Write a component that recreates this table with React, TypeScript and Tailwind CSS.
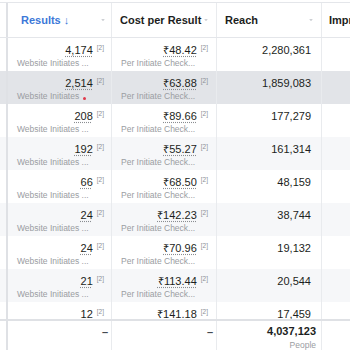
import React from "react";

type Row = {
  results: string;
  cost: string;
  reach: string;
  flagged?: boolean;
};

const rows: Row[] = [
  { results: "4,174", cost: "₹48.42", reach: "2,280,361" },
  { results: "2,514", cost: "₹63.88", reach: "1,859,083", flagged: true },
  { results: "208", cost: "₹89.66", reach: "177,279" },
  { results: "192", cost: "₹55.27", reach: "161,314" },
  { results: "66", cost: "₹68.50", reach: "48,159" },
  { results: "24", cost: "₹142.23", reach: "38,744" },
  { results: "24", cost: "₹70.96", reach: "19,132" },
  { results: "21", cost: "₹113.44", reach: "20,544" },
  { results: "12", cost: "₹141.18", reach: "17,459" },
];

function rowBg(i: number) {
  if (i === 1) return "bg-[#e2e4e8]";
  return i % 2 === 1 ? "bg-[#f6f7f9]" : "bg-white";
}

function Caret() {
  return (
    <svg className="w-2 h-2 text-[#bcc0c6] shrink-0" viewBox="0 0 8 8" aria-hidden="true">
      <path d="M2.2 3.2 L4 5 L5.8 3.2 Z" fill="currentColor" />
    </svg>
  );
}

function Metric({ value }: { value: string }) {
  return (
    <span className="h-[14px] flex items-start justify-end leading-[14px]">
      <span className="underline decoration-dotted decoration-[#8a8d91] underline-offset-[2px]">{value}</span>
      <span className="ml-[4px] text-[6.5px] leading-[9px] text-[#8d9096]">[2]</span>
    </span>
  );
}

export default function App() {
  return (
    <div
      className="w-[350px] h-[350px] overflow-hidden bg-white flex flex-col text-[#1c1e21]"
      style={{ fontFamily: "'Liberation Sans', Arial, sans-serif" }}
    >
      {/* Header */}
      <div className="mt-[2px] h-[36px] flex border-t border-b border-[#e4e6ea] shrink-0">
        <div className="w-[8px] shrink-0 border-r-2 border-[#dfe1e5]" />
        <div className="w-[104px] shrink-0 flex items-center justify-between pl-[13px] pr-[4px] border-r border-[#e9ebee]">
          <span className="text-[11px] font-bold text-[#3c78d8] whitespace-nowrap">Results ↓</span>
          <Caret />
        </div>
        <div className="w-[105px] shrink-0 flex items-center justify-between pl-[8px] pr-[6px] border-r border-[#e9ebee]">
          <span className="text-[11px] font-bold whitespace-nowrap">Cost per Result</span>
          <Caret />
        </div>
        <div className="w-[105px] shrink-0 flex items-center justify-between pl-[8px] pr-[6px] border-r border-[#e9ebee]">
          <span className="text-[11px] font-bold">Reach</span>
          <Caret />
        </div>
        <div className="flex-1 flex items-center pl-[7px] overflow-hidden">
          <span className="text-[11px] font-bold whitespace-nowrap">Impressions</span>
        </div>
      </div>

      {/* Body */}
      <div className="flex-1 overflow-hidden">
        {rows.map((r, i) => (
          <div key={i} className={`h-[33px] flex text-[11px] ${rowBg(i)}`}>
            <div className="w-[8px] shrink-0 border-r-2 border-[#dfe1e5]" />
            <div className="w-[104px] shrink-0 flex flex-col pt-[5px] pl-[9px] pr-[7px] border-r border-[#e9ebee]">
              <Metric value={r.results} />
              <div className="mt-[1px] h-[11px] leading-[11px] text-[8.5px] text-[#9a9da2] whitespace-nowrap flex items-center">
                {r.flagged ? (
                  <>
                    Website Initiates
                    <span className="ml-[4px] mt-[3px] w-[3px] h-[3px] rounded-full bg-[#e0394b]" />
                  </>
                ) : (
                  "Website Initiates ..."
                )}
              </div>
            </div>
            <div className="w-[105px] shrink-0 flex flex-col pt-[5px] pl-[9px] pr-[8px] border-r border-[#e9ebee]">
              <Metric value={r.cost} />
              <div className="mt-[1px] h-[11px] leading-[11px] text-[8.5px] text-[#9a9da2] whitespace-nowrap">Per Initiate Check...</div>
            </div>
            <div className="w-[105px] shrink-0 flex justify-end pt-[5px] pr-[10px] leading-[14px] border-r border-[#e9ebee]">
              {r.reach}
            </div>
            <div className="flex-1" />
          </div>
        ))}
      </div>

      {/* Summary */}
      <div className="h-[31px] shrink-0 flex border-t-2 border-[#dfe1e5] bg-white">
        <div className="w-[8px] shrink-0 border-r-2 border-[#dfe1e5]" />
        <div className="w-[104px] shrink-0 flex justify-end items-start pt-[3px] pr-[3px] border-r border-[#e9ebee] text-[11px] leading-[16px] font-bold text-[#444950]">–</div>
        <div className="w-[105px] shrink-0 flex justify-end items-start pt-[3px] pr-[3px] border-r border-[#e9ebee] text-[11px] leading-[16px] font-bold text-[#444950]">–</div>
        <div className="w-[105px] shrink-0 flex flex-col items-end pt-[3px] pr-[5px] border-r border-[#e9ebee]">
          <span className="text-[11px] font-bold leading-[15px]">4,037,123</span>
          <span className="text-[8.5px] text-[#9a9da2] leading-[12px]">People</span>
        </div>
        <div className="flex-1" />
      </div>
    </div>
  );
}
